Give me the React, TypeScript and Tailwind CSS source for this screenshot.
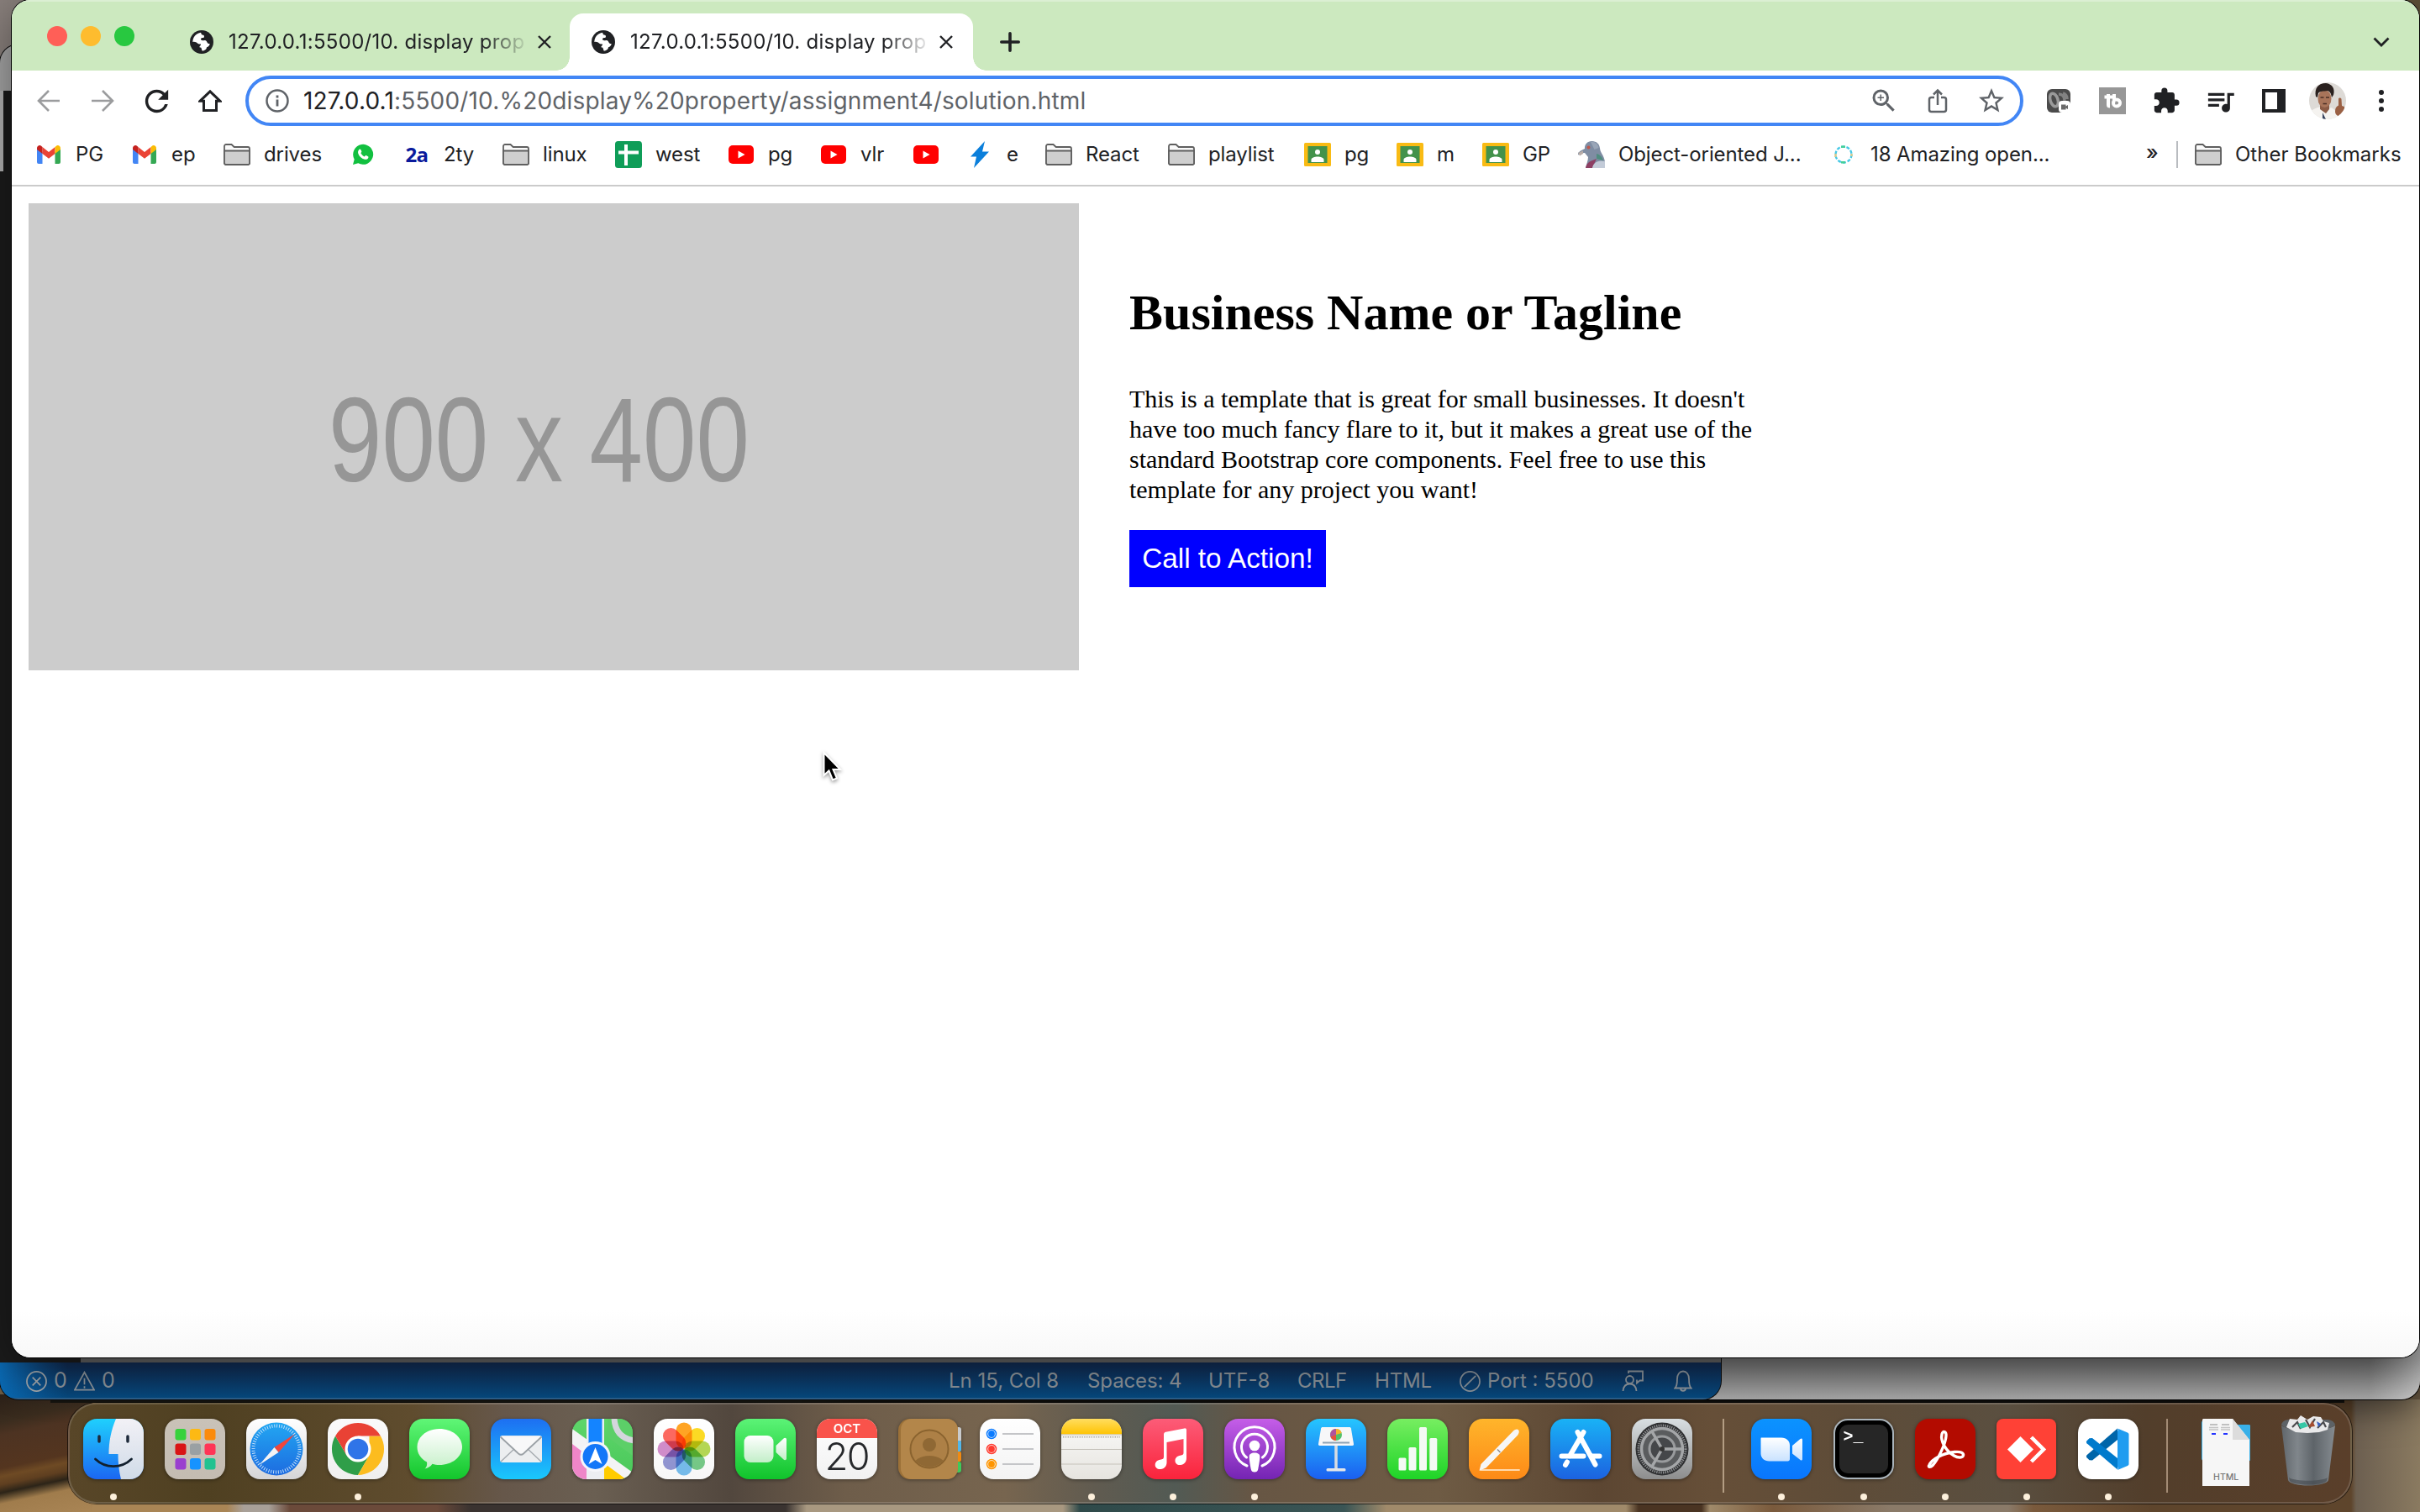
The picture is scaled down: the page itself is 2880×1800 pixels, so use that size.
import React from 'react';
import type { ReactNode } from 'react';
import { MdExtension, MdQueueMusic, MdRefresh, MdStarBorder, MdZoomIn } from 'react-icons/md';

/* ---------- small browser icons ---------- */

const Globe = () => (
  <svg viewBox="0 0 28 28" className="size-[28px] shrink-0">
    <circle cx="14" cy="14" r="14" fill="#202124" />
    <path
      d="M13 2.8c-3.600.4-6.900 2.800-8.500 6 -.8 1.600-1.200 3.300-1.200 5.200 2.500-.6 4.300.2 5.700 1.500 1 .9 2.300 1 3.600.8l.4 1.700c-1 .4-1.700 1.200-1.600 2.300l2 .5 1.200 3.800c3.800-.4 5.200-2.400 5.400-4.400 1.900-.5 3.500-2 3.700-4.300-1.600.3-3-.6-3.400-2-.7-1.600-2.200-2-4-1.700-1.600.2-3.400-.1-3.300-1.600.1-1.300 1.500-1.500 2.900-1.600 1-.2 1.200-1.200 1-2.200-.3-1.300-1.700-1.400-2.900-1.600z"
      fill="#fff"
    />
    <path d="M3.300 14.300c1.900-.5 4.300.6 5.100 2.500.5 1.300 2.600 1.100 2.600 2.500 0 1.300-1.700 1.900-1.500 4.100C5.900 21.800 3.300 18.200 3.300 14.300z" fill="#202124" />
  </svg>
);

const CloseX = () => (
  <svg viewBox="0 0 16 16" className="size-4 shrink-0" stroke="#202124" strokeWidth="2.4">
    <path d="M1 1l14 14M15 1L1 15" />
  </svg>
);

const Gmail = () => (
  <svg viewBox="0 0 28 22" className="w-[28px] h-[22px]">
    <path d="M0 4v16a2 2 0 0 0 2 2h4.500V8z" fill="#4285f4" />
    <path d="M28 4v16a2 2 0 0 1-2 2h-4.500V8z" fill="#34a853" />
    <path d="M6.500 2l7.500 6 7.500-6v8L14 15.800 6.500 10z" fill="#ea4335" />
    <path d="M0 3.500C0 .5 3.300-.9 5.300.9L6.500 2v8L0 5z" fill="#c5221f" />
    <path d="M28 3.500C28 .5 24.700-.9 22.700.9L21.500 2v8L28 5z" fill="#fbbc04" />
  </svg>
);

const Folder = () => (
  <svg viewBox="0 0 32 26" className="w-[32px] h-[26px] shrink-0" stroke="#5f5f5f" strokeWidth="1.800">
    <path d="M1 23V3a2 2 0 0 1 2-2h6.500l3.200 3H29a2 2 0 0 1 2 2v17a1.800 1.800 0 0 1-2 2H3a2 2 0 0 1-2-2z" fill="#fafafa" />
    <path d="M1 8.500h30V23a1.800 1.800 0 0 1-2 2H3a2 2 0 0 1-2-2z" fill="#cfcfcf" />
  </svg>
);

const WhatsApp = () => (
  <svg viewBox="0 0 26 26" className="size-[26px]">
    <path d="M1 25l1.700-6.300A12 12 0 1 1 7.300 23.300z" fill="#12c040" />
    <path
      d="M8.600 6.800c.5-.5 1.400-.5 1.700.2l1 2.300c.2.500-.1 1-.9 1.900 1 2 2.400 3.300 4.500 4.200.8-1 1.200-1.600 1.800-1.300l2.300 1.100c.6.300.5 1.200.1 2-.7 1.300-2.400 1.900-4 1.500-4-1-6.900-3.900-7.900-7.300-.5-1.800.3-3.600 1.400-4.600z"
      fill="#fff"
    />
  </svg>
);

const Sheets = () => (
  <svg viewBox="0 0 32 32" className="size-8">
    <rect width="32" height="32" rx="3.500" fill="#0f9d58" />
    <path d="M11 4h4v7.500h13v4H15V29h-4V15.500H4v-4h7z" fill="#fff" />
  </svg>
);

const YouTube = () => (
  <svg viewBox="0 0 30 22" className="w-[30px] h-[22px]">
    <rect width="30" height="22" rx="5" fill="#f00" />
    <path d="M11.500 6.500v9l8-4.500z" fill="#fff" />
  </svg>
);

const Bolt = () => (
  <svg viewBox="0 0 22 32" className="w-[22px] h-8">
    <path d="M17 0L0 18.500h7L4 32 22 12.500h-8z" fill="#0b7fdb" />
  </svg>
);

const Classroom = () => (
  <svg viewBox="0 0 32 28" className="w-8 h-7">
    <rect width="32" height="28" rx="1.500" fill="#f9bb14" />
    <rect x="4.500" y="4" width="23" height="20" fill="#43924b" />
    <circle cx="16" cy="11" r="3" fill="#fff" />
    <path d="M8.500 23v-3c0-2 4-3.500 7.500-3.500s7.500 1.500 7.500 3.500v3z" fill="#fff" />
  </svg>
);

const Pigeon = () => (
  <svg viewBox="0 0 32 32" className="size-8">
    <path d="M8 9C7.500 4 11 0 16.500 0c5.500 0 9 3.500 9.500 8.500.3 3.500 2 5.500 3.500 8.500 1.500 3 2.500 6 2.500 9v6H9c1-5 3-9 3-13l-4-5-5 .5-3 2v-2.500l3-2.500z" fill="#7f8da3" />
    <path d="M15 1c4-1 9 2 9.500 7l-5 2z" fill="#9aa6b8" />
    <path d="M22 15c4 1 7 4 8 8l-8-2z" fill="#4f8c7f" />
    <path d="M9 32c1-4 3-7.500 8-9l5-2-5 11z" fill="#8d3f63" />
    <path d="M17 32c1-6 6-10 15-8v8z" fill="#c3cbd8" />
    <circle cx="12.500" cy="7.500" r="2" fill="#c0564a" />
    <path d="M0 14l6-2.500v3.500l-4 2.500z" fill="#b7aca8" />
  </svg>
);

const DashedRing = () => (
  <svg viewBox="0 0 24 24" className="size-6" fill="none" strokeWidth="2.400">
    <circle cx="12" cy="12" r="9.500" stroke="#45c8e6" strokeDasharray="4 2" />
    <path d="M2.500 11v4M21.500 11v3" stroke="#d9c98a" />
    <path d="M9 2.800h5M9 21.200h5" stroke="#45cf9a" />
  </svg>
);

const Arrow = ({ flip = false }: { flip?: boolean }) => (
  <svg viewBox="0 0 28 28" className={flip ? 'size-[28px] rotate-180' : 'size-[28px]'} fill="none" stroke="#9b9c9e" strokeWidth="2.600">
    <path d="M27 14H2.500M14 2L2 14l12 12" />
  </svg>
);

const Home = () => (
  <svg viewBox="0 0 28 28" className="size-[28px]" fill="none" stroke="#202124" strokeWidth="3">
    <path d="M2.200 14.200L14 2.800l11.800 11.400h-4.300V25.500H6.500V14.200z" />
  </svg>
);

const InfoCircle = () => (
  <svg viewBox="0 0 28 28" className="size-[28px] shrink-0" fill="none" stroke="#5f6368" strokeWidth="2.500">
    <circle cx="14" cy="14" r="12.500" />
    <path d="M14 12.500v8M14 7.500v3" strokeWidth="2.800" />
  </svg>
);

const Share = () => (
  <svg viewBox="0 0 24 30" className="w-6 h-[30px]" fill="none" stroke="#5f6368" strokeWidth="2.500">
    <path d="M8 11H4.500A2.500 2.500 0 0 0 2 13.500v12A2.500 2.500 0 0 0 4.500 28h15a2.500 2.500 0 0 0 2.500-2.500v-12a2.500 2.500 0 0 0-2.500-2.500H16M12 20V2.500M7 7.500l5-5 5 5" />
  </svg>
);

const Recorder = () => (
  <svg viewBox="0 0 28 28" className="size-[28px]">
    <rect width="28" height="28" rx="6" fill="#4b4b4b" />
    <ellipse cx="8.500" cy="13" rx="4.500" ry="8" fill="none" stroke="#9a9a9a" strokeWidth="3.500" transform="rotate(-18 8.500 13)" />
    <path d="M14 6c4 0 7 3 7 8M19 5c3 1 5 3 5 7" fill="none" stroke="#828282" strokeWidth="3.500" />
    <rect x="14" y="14" width="14" height="14" rx="4" fill="#fff" />
    <path d="M17 18.500h5.500v2l2.500-1.500v5l-2.500-1.500v2H17z" fill="#6a6a6a" />
  </svg>
);

/* A "tb" monogram with a play-button counter. */
const TubeBuddy = () => (
  <svg viewBox="0 0 32 32" className="size-8" fill="none" stroke="#fff" strokeWidth="4">
    <rect width="32" height="32" fill="#979797" stroke="none" />
    <path d="M6.500 11.500h13M11 8v13c0 1 .5 1.500 2 1.500M18 8v10" />
    <circle cx="21" cy="18.500" r="4" />
    <path d="M19.500 16.200l4 2.300-4 2.300z" fill="#979797" stroke="none" />
  </svg>
);

const SidePanel = () => <div className="size-[28px] border-4 border-r-[10px] border-[#202124] bg-white" />;

const Avatar = () => (
  <svg viewBox="0 0 44 44" className="size-11">
    <clipPath id="avatar">
      <circle cx="22" cy="22" r="22" />
    </clipPath>
    <g clipPath="url(#avatar)">
      <rect width="44" height="44" fill="#dddad6" />
      <path d="M0 36c4-4 9-6 14-7l6 6 6-5c5 2 8 6 9 16H0z" fill="#f5f3f0" />
      <path d="M13 24h11v8l-4 5-7-5z" fill="#8a5a45" />
      <ellipse cx="18.500" cy="19.500" rx="8" ry="10.500" fill="#a8745a" />
      <path d="M8 17C6 7 11 1 20 1c8 1 11 7 9 14l-2 3c-1-5-2-7-5-8-5 1-9 0-11 3l-1 5z" fill="#2a211f" />
      <path d="M13.500 18h4M20 18h4M16.500 25.500h4.500" stroke="#4a2e25" strokeWidth="1.300" />
      <path d="M16 36l4 8h-4z" fill="#33405c" />
      <path d="M31 35c0-4 1-6 4-7.500V20c0-2 3-2 3.500 0l.5 8 3 1v9l-5 3c-4-1-6-3-6-6z" fill="#9a6044" />
    </g>
  </svg>
);

const Dots = () => (
  <div className="flex flex-col gap-1">
    <span className="size-1.5 rounded-full bg-[#202124]" />
    <span className="size-1.5 rounded-full bg-[#202124]" />
    <span className="size-1.5 rounded-full bg-[#202124]" />
  </div>
);

/* ---------- browser chrome ---------- */

function Tab({ active = false }: { active?: boolean }) {
  return (
    <div className={'relative flex h-[68px] items-center rounded-t-[16px] pl-[26px] ' + (active ? 'w-[480px] bg-white' : 'w-[478px]')}>
      {active && (
        <>
          <span className="absolute bottom-0 -left-4 size-4 bg-[radial-gradient(circle_at_0_0,#cce9bf_15.500px,#fff_16px)]" />
          <span className="absolute -right-4 bottom-0 size-4 bg-[radial-gradient(circle_at_100%_0,#cce9bf_15.500px,#fff_16px)]" />
        </>
      )}
      <Globe />
      <span className="mr-[13px] ml-[18px] w-[355px] whitespace-pre text-[24px] tracking-[0.280px] text-[#202124] [mask-image:linear-gradient(90deg,#000_85%,transparent_101%)]">
        127.0.0.1:5500/10. display prop
      </span>
      <CloseX />
    </div>
  );
}

const bookmarks: { icon: ReactNode; label: string; width: string }[] = [
  { icon: <Gmail />, label: 'PG', width: 'w-[114px]' },
  { icon: <Gmail />, label: 'ep', width: 'w-[110px]' },
  { icon: <Folder />, label: 'drives', width: 'w-[150px]' },
  { icon: <WhatsApp />, label: '', width: 'w-[64px]' },
  { icon: <span className="font-['Open_Sans'] text-[24px] font-bold tracking-[-0.500px] text-[#0a1a9c]">2a</span>, label: '2ty', width: 'w-[118px]' },
  { icon: <Folder />, label: 'linux', width: 'w-[134px]' },
  { icon: <Sheets />, label: 'west', width: 'w-[134px]' },
  { icon: <YouTube />, label: 'pg', width: 'w-[110px]' },
  { icon: <YouTube />, label: 'vlr', width: 'w-[110px]' },
  { icon: <YouTube />, label: '', width: 'w-[64px]' },
  { icon: <Bolt />, label: 'e', width: 'w-[94px]' },
  { icon: <Folder />, label: 'React', width: 'w-[146px]' },
  { icon: <Folder />, label: 'playlist', width: 'w-[162px]' },
  { icon: <Classroom />, label: 'pg', width: 'w-[110px]' },
  { icon: <Classroom />, label: 'm', width: 'w-[102px]' },
  { icon: <Classroom />, label: 'GP', width: 'w-[114px]' },
  { icon: <Pigeon />, label: 'Object-oriented J...', width: 'w-[300px]' },
  { icon: <DashedRing />, label: '18 Amazing open...', width: 'w-[270px]' },
];

const ToolButton = ({ children }: { children: ReactNode }) => <div className="flex w-16 shrink-0 items-center justify-center">{children}</div>;

function BrowserWindow() {
  return (
    <div className="absolute top-0 left-[14px] flex h-[1616px] w-[2865px] flex-col overflow-hidden rounded-[22px] bg-white shadow-[0_0_0_1px_#000,0_12px_60px_rgba(0,0,0,0.45)]">
      <div className="flex h-[84px] shrink-0 items-end border-t-2 border-[#dbefd3] bg-[#cce9bf]">
        <div className="flex h-[82px] w-[186px] items-center gap-4 pl-[42px]">
          <span className="size-6 rounded-full bg-[#ff5f57]" />
          <span className="size-6 rounded-full bg-[#febc2e]" />
          <span className="size-6 rounded-full bg-[#28c840]" />
        </div>
        <Tab />
        <Tab active />
        <div className="flex h-[68px] flex-1 items-center justify-between pr-[35px] pl-8">
          <svg viewBox="0 0 24 24" className="size-6" stroke="#202124" strokeWidth="3.600" strokeLinecap="round">
            <path d="M12 1.800v20.400M1.800 12h20.400" />
          </svg>
          <svg viewBox="0 0 20 12" className="w-5 h-3" fill="none" stroke="#202124" strokeWidth="2.800">
            <path d="M1.500 1.500L10 10l8.500-8.500" />
          </svg>
        </div>
      </div>

      <div className="flex h-[72px] shrink-0 items-center pl-3">
        <ToolButton><Arrow /></ToolButton>
        <ToolButton><Arrow flip /></ToolButton>
        <ToolButton><MdRefresh className="size-[41px] text-[#202124]" /></ToolButton>
        <ToolButton><Home /></ToolButton>
        <div className="ml-[10px] flex h-[60px] w-[2116px] items-center rounded-full border-4 border-[#4286f5] pr-0.5 pl-5">
          <InfoCircle />
          <span className="ml-[17px] flex-1 whitespace-pre text-[28px] tracking-[0.170px] text-[#5f6368]">
            <span className="text-[#202124]">127.0.0.1</span>:5500/10.%20display%20property/assignment4/solution.html
          </span>
          <ToolButton><MdZoomIn className="size-9 text-[#5f6368]" /></ToolButton>
          <ToolButton><Share /></ToolButton>
          <ToolButton><MdStarBorder className="size-9 text-[#5f6368]" /></ToolButton>
        </div>
        <div className="ml-[10px] flex items-center">
          <ToolButton><Recorder /></ToolButton>
          <ToolButton><TubeBuddy /></ToolButton>
          <ToolButton><MdExtension className="size-[34px] text-[#202124]" /></ToolButton>
          <ToolButton><MdQueueMusic className="size-[39px] text-[#202124]" /></ToolButton>
          <ToolButton><SidePanel /></ToolButton>
          <ToolButton><Avatar /></ToolButton>
          <ToolButton><Dots /></ToolButton>
        </div>
      </div>

      <div className="flex h-[66px] shrink-0 items-center border-b-2 border-[#cbcbcb] pb-2 pl-7 text-[24px] text-[#202124]">
        {bookmarks.map((b, i) => (
          <div key={i} className={'flex shrink-0 items-center gap-4 whitespace-pre ' + b.width}>
            <span className="flex w-8 shrink-0 items-center justify-center">{b.icon}</span>
            <span className="tracking-[-0.100px]">{b.label}</span>
          </div>
        ))}
        <span className="ml-[106px] w-[36px] pb-1 font-medium">»</span>
        <span className="h-8 w-0.5 bg-[#b9bcc0]" />
        <span className="ml-5 flex items-center gap-4 whitespace-pre"><Folder />Other Bookmarks</span>
      </div>

      <div className="flex min-h-0 flex-1 items-start bg-[linear-gradient(180deg,#fff_96%,#f8f8f8)] p-5">
        <div className="h-[556px] w-[1250px] shrink-0 bg-[#ccc] pt-[211px] pl-[357px]">
          <span className="inline-block origin-left scale-x-[0.803] whitespace-pre font-['Liberation_Sans'] text-[142px] leading-[142px] text-[#969696]">900 x 400</span>
        </div>
        <div className="ml-[60px] pt-[96px] font-['Liberation_Serif'] text-black">
          <h1 className="text-[60px] leading-[68px] font-bold">Business Name or Tagline</h1>
          <p className="mt-[51px] text-[30px] leading-[36px] tracking-[-0.020px] whitespace-pre">
            This is a template that is great for small businesses. It doesn't{'\n'}
            have too much fancy flare to it, but it makes a great use of the{'\n'}
            standard Bootstrap core components. Feel free to use this{'\n'}
            template for any project you want!
          </p>
          <button className="mt-[30px] flex h-[68px] w-[234px] items-center justify-center bg-[#00f] font-['Liberation_Sans'] text-[33.300px] text-white">
            <span className="whitespace-pre">Call to Action!</span>
          </button>
        </div>
      </div>
    </div>
  );
}

/* ---------- editor window behind the browser ---------- */

const Gap = ({ className, children }: { className: string; children: ReactNode }) => <span className={'flex shrink-0 items-center whitespace-pre ' + className}>{children}</span>;

function EditorWindow() {
  return (
    <div className="absolute top-[53px] left-0 flex h-[1613px] w-[2048px] flex-col justify-between overflow-hidden rounded-[22px] bg-[#1c1c1c] shadow-[0_0_0_1px_#0b0b0b]">
      <div className="h-[55px] bg-[#a6a6a6]" />
      <div className="flex h-[1514px] flex-col justify-between">
        <div className="h-[96px] w-1 bg-[#b5b5b5]" />
        <div className="ml-[96px] h-[6px] bg-[#626262]" />
      </div>
      <div className="flex h-[44px] shrink-0 items-center border-b-2 border-[#2d608c] bg-[linear-gradient(90deg,#0a6ab4_0,rgba(10,106,180,0)_80px),linear-gradient(180deg,#112b52,#064a80)] pt-0.5 pl-[31px] text-[25px] text-[#8f979e]">
        <svg viewBox="0 0 26 26" className="size-[25px]" fill="none" stroke="#a3a8ac" strokeWidth="1.800">
          <circle cx="13" cy="13" r="12" /><path d="M8 8l10 10M18 8L8 18" />
        </svg>
        <Gap className="w-[32px] pl-2">0</Gap>
        <svg viewBox="0 0 26 26" className="size-[25px]" fill="none" stroke="#8f979e" strokeWidth="1.800">
          <path d="M13 1.800L25 23.500H1zM13 9v8M13 19v2.500" />
        </svg>
        <Gap className="w-[1016px] pl-2">0</Gap>
        <Gap className="w-[165px] text-[24px]">Ln 15, Col 8</Gap>
        <Gap className="w-[144px] text-[24px] tracking-[-0.100px]">Spaces: 4</Gap>
        <Gap className="w-[106px] text-[24px]">UTF-8</Gap>
        <Gap className="w-[92px] text-[24px] tracking-[-0.500px]">CRLF</Gap>
        <Gap className="w-[101px] text-[24px] tracking-[-0.200px]">HTML</Gap>
        <svg viewBox="0 0 26 26" className="size-[25px]" fill="none" stroke="#8f979e" strokeWidth="1.800">
          <circle cx="13" cy="13" r="12" /><path d="M20 6L6 20" />
        </svg>
        <Gap className="w-[168px] pl-2 text-[24px]">Port : 5500</Gap>
        <svg viewBox="0 0 26 26" className="size-[26px]" fill="none" stroke="#8f979e" strokeWidth="1.800">
          <circle cx="9.500" cy="11.500" r="4.500" /><path d="M1.500 25c.5-5.500 3.500-8.500 8-8.500s7.500 3 8 8.500M8 4V1.500h17v11h-3.500L18 15.500v-4" />
        </svg>
        <svg viewBox="0 0 22 26" className="ml-[36px] w-[22px] h-[26px]" fill="none" stroke="#8f979e" strokeWidth="1.800">
          <path d="M1.500 21.500c2-2 2.500-4 2.500-11C4 5 7 1.500 11 1.500S18 5 18 10.500c0 7 .5 9 2.500 11zM8 22.500c.5 3 5.500 3 6 0" />
        </svg>
      </div>
    </div>
  );
}

/* ---------- dock ---------- */

const Svg = ({ children }: { children: ReactNode }) => (
  <svg viewBox="0 0 72 72" className="size-[72px] overflow-visible">{children}</svg>
);

const Grad = ({ id, a, b }: { id: string; a: string; b: string }) => (
  <linearGradient id={id} x1="0" y1="0" x2="0" y2="1"><stop offset="0" stopColor={a} /><stop offset="1" stopColor={b} /></linearGradient>
);

const Tile = ({ id, a, b, children }: { id: string; a: string; b: string; children?: ReactNode }) => (
  <Svg>
    <defs><Grad id={id} a={a} b={b} /><clipPath id={id + 'c'}><rect width="72" height="72" rx="16.500" /></clipPath></defs>
    <rect width="72" height="72" rx="16.500" fill={'url(#' + id + ')'} />
    <g clipPath={'url(#' + id + 'c)'}>{children}</g>
  </Svg>
);

const Finder = () => (
  <Tile id="fi" a="#1fd0fd" b="#1b67f2">
    <defs><Grad id="fi2" a="#f2f1f6" b="#d0dbe8" /></defs>
    <path d="M39 0c-6 14-8.500 28-8.500 42h11c0 10 1 20 3.500 30H72V0z" fill="url(#fi2)" />
    <path d="M19 21v6M53 21v6" stroke="#1d2a3a" strokeWidth="3.500" strokeLinecap="round" />
    <path d="M14.500 48c12 11.500 31 11.500 43 0" stroke="#12202e" strokeWidth="2.800" strokeLinecap="round" fill="none" />
  </Tile>
);

const launchColors = ['#37d23c', '#fdb913', '#fb8b0c', '#d91414', '#9aa0a3', '#ff3556', '#9a3fcf', '#1793ff', '#22c290'];
const Launchpad = () => (
  <Tile id="la" a="#c9c2b8" b="#c4bcb2">
    {launchColors.map((c, i) => <rect key={i} x={12.500 + (i % 3) * 17.500} y={12 + Math.floor(i / 3) * 17.500} width="13" height="13.500" rx="3" fill={c} />)}
  </Tile>
);

const Safari = () => (
  <Tile id="sa" a="#ffffff" b="#d5d5d7">
    <defs><Grad id="sa2" a="#22a7f2" b="#1d6be0" /></defs>
    <circle cx="36" cy="36" r="31.500" fill="url(#sa2)" />
    <circle cx="36" cy="36" r="27.500" fill="none" stroke="#cfe6fb" strokeWidth="4" strokeDasharray="0.900 1.980" />
    <path d="M58 18L38.500 40 33.500 34z" fill="#f0463c" />
    <path d="M15.500 55L38.500 40 33.500 34z" fill="#f3f3f5" />
  </Tile>
);

const Chrome = () => (
  <Tile id="ch" a="#fafafa" b="#efefef">
    <path d="M9.100 20.500A31 31 0 0 0 36 67L49.500 43.500 36 36 22.500 43.500z" fill="#2f9e49" />
    <path d="M62.900 20.500A31 31 0 0 1 36 67L49.500 43.500 49.500 20.500z" fill="#fcbc1f" />
    <path d="M36 20.500h26.900A31 31 0 0 0 9.100 20.500L22.500 43.500z" fill="#e94235" />
    <circle cx="36" cy="36" r="15.500" fill="#fff" />
    <circle cx="36" cy="36" r="12.300" fill="#2f74e8" />
  </Tile>
);

const Messages = () => (
  <Tile id="me" a="#60f677" b="#13c62c">
    <defs><Grad id="me2" a="#ffffff" b="#c6f0c9" /></defs>
    <path d="M36 12c15 0 27 9.500 27 21.500S51 55 36 55c-3 0-6-.4-8.500-1.200C25.500 57 22 59 18.500 59.500c2.500-2 3-5 2.500-8C13.500 47.500 9.500 41 9.500 33.500 9.500 21.500 21 12 36 12z" fill="url(#me2)" />
  </Tile>
);

const Mail = () => (
  <Tile id="ma" a="#1d6ff2" b="#1ac8fc">
    <rect x="11" y="20" width="50" height="32" rx="3" fill="#eceef0" />
    <path d="M12 51l18-17M60 51L42 34" stroke="#a8adb2" strokeWidth="1.500" />
    <path d="M11.500 21.500L33 41.500c2 1.700 4 1.700 6 0L60.500 21.500" stroke="#9ba1a6" strokeWidth="1.800" fill="#f8f8f9" />
  </Tile>
);

const Maps = () => (
  <Tile id="mp" a="#5ed66a" b="#49c75a">
    <path d="M0 12l72 52v8H0z" fill="#f3f3f5" />
    <path d="M0 30l17 13v29H0z" fill="#ee86c8" />
    <path d="M38 53l26 19H38z" fill="#ffcc00" />
    <path d="M42 22l30 22V0H42z" fill="#5ccf68" />
    <path d="M17 0h21v72H17z" fill="#eceef2" />
    <path d="M19.500 0h16v34h-16z" fill="#1484ff" />
    <path d="M50 0c1 15 9 24 24 26" stroke="#d4d6dc" strokeWidth="7" fill="none" />
    <circle cx="27.500" cy="45" r="18" fill="#f5f6fa" />
    <circle cx="27.500" cy="45" r="15" fill="#1477f8" />
    <path d="M27.500 34l8 20-8-5-8 5z" fill="#fff" />
  </Tile>
);

const petals = ['#ff9500', '#fad400', '#a8cf38', '#5fbf73', '#5fb0e6', '#7f83c9', '#c879c0', '#fb5046'];
const Photos = () => (
  <Tile id="ph" a="#ffffff" b="#f7f7f7">
    {petals.map((c, i) => <rect key={c} x="26.500" y="4.500" width="19" height="31" rx="9.500" fill={c} fillOpacity="0.860" className="mix-blend-multiply" transform={'rotate(' + i * 45 + ' 36 36)'} />)}
  </Tile>
);

const FaceTime = () => (
  <Tile id="ft" a="#5cf377" b="#10c32b">
    <defs><Grad id="ft2" a="#ffffff" b="#c2eec8" /></defs>
    <rect x="10.500" y="20" width="35" height="32" rx="7.500" fill="url(#ft2)" />
    <path d="M48.500 32l9-8.500c1.500-1.300 3.500-.8 3.500 1.300v22.400c0 2-2 2.600-3.500 1.300l-9-8.500z" fill="url(#ft2)" />
  </Tile>
);

const Calendar = () => (
  <div className="flex size-[72px] flex-col overflow-hidden rounded-[16.500px] bg-[linear-gradient(180deg,#fff,#f1f1f1)] text-center">
    <span className="h-[22.500px] bg-[#f9534b] text-[15px] leading-[24px] font-semibold text-white">OCT</span>
    <span className="font-['Inter'] text-[45px] leading-[44px] font-light tracking-[-1.500px] text-[#26282b]">20</span>
  </div>
);

const Contacts = () => (
  <Svg>
    <rect x="60" y="10" width="15" height="18" rx="3" fill="#c9cbcd" />
    <rect x="60" y="26" width="15" height="13" rx="2" fill="#52b7ea" />
    <rect x="60" y="39" width="15" height="12" rx="2" fill="#f08a12" />
    <rect x="60" y="51" width="15" height="13" rx="3" fill="#3fc95b" />
    <rect width="71" height="72" rx="14" fill="#9c7138" />
    <rect x="3" width="68" height="72" rx="13" fill="#b3864a" />
    <clipPath id="coc"><circle cx="37" cy="36" r="21.500" /></clipPath>
    <circle cx="37" cy="36" r="22.500" fill="#ad8046" stroke="#8a632f" strokeWidth="2" />
    <g clipPath="url(#coc)"><circle cx="37" cy="31" r="8" fill="#8f6834" /><ellipse cx="37" cy="56" rx="19" ry="12" fill="#8f6834" /></g>
  </Svg>
);

const Reminders = () => (
  <Tile id="re" a="#ffffff" b="#f3f3f3">
    {['#0b7bff', '#ff3b30', '#ff9500'].map((c, i) => (
      <g key={c}>
        <circle cx="14" cy={18 + i * 18} r="5.500" fill="none" stroke={c} strokeWidth="1.500" />
        <circle cx="14" cy={18 + i * 18} r="3.900" fill={c} />
        <path d={'M27 ' + (18 + i * 18) + 'h37'} stroke="#c4c5c8" strokeWidth="1.800" />
      </g>
    ))}
  </Tile>
);

const Notes = () => (
  <Tile id="no" a="#fbfbfa" b="#e6e4df">
    <defs><Grad id="no2" a="#ffdd60" b="#fec302" /></defs>
    <rect width="72" height="18.500" fill="url(#no2)" />
    <path d="M0 19h72M0 36.500h72M0 54h72" stroke="#c5c2ba" strokeWidth="1.200" />
    <path d="M2 21.800h68" stroke="#a8a59e" strokeWidth="1.400" strokeDasharray="1.400 1.400" />
  </Tile>
);

const Music = () => (
  <Tile id="mu" a="#fc5c78" b="#fa233b">
    <path d="M25 18.500c0-1.500 1-2.400 2.400-2.700L49.500 11.400c1.500-.3 2.500.5 2.500 2V47c0 4.500-3 7.500-7 8-4 .5-6.500-2-6.500-5 0-3.500 2.500-5.500 6-6.200 3-.6 4-1 4-3.800V24L28.500 28v24c0 4.500-3 7.500-7 8-4 .5-6.800-2-6.800-5 0-3.500 2.500-5.500 6-6.200 3.200-.6 4.300-1 4.300-4z" fill="#fff" />
  </Tile>
);

const Podcasts = () => (
  <Tile id="po" a="#c55ee8" b="#7424b3">
    <g fill="none" stroke="#fff" strokeWidth="3" strokeLinecap="round">
      <path d="M27 56A24 24 0 1 1 45 56" /><path d="M26.500 46A15.500 15.500 0 1 1 45.500 46" />
    </g>
    <circle cx="36" cy="32" r="6.300" fill="#fff" />
    <path d="M36 40.500c4 0 6.300 1.500 6.300 4.500 0 4-1.300 11-2 15-.4 2.500-2 3.500-4.300 3.500s-3.900-1-4.300-3.500c-.7-4-2-11-2-15 0-3 2.300-4.500 6.300-4.500z" fill="#fff" />
  </Tile>
);

const Keynote = () => (
  <Tile id="ke" a="#25c6ff" b="#1b5ff0">
    <path d="M36 32v28" stroke="#d8dce2" strokeWidth="3.500" />
    <rect x="24.500" y="59" width="23" height="3.500" rx="1.500" fill="#e3e6ea" />
    <path d="M20 10h32c1 0 1.700.6 1.900 1.600L57 30c.2 1.200-.5 2-1.600 2H16.600c-1.100 0-1.800-.8-1.600-2l3.100-18.400c.2-1 .9-1.600 1.900-1.600z" fill="#f7f7f8" />
    <path d="M20 28.500h32" stroke="#8ea3b5" strokeWidth="1.800" />
    <circle cx="36" cy="19" r="7" fill="#52c26a" />
    <path d="M36 19V12a7 7 0 0 1 6.700 5z" fill="#f6b32b" /><path d="M36 19V12a7 7 0 0 0-6.500 9.500z" fill="#b0529d" /><path d="M36 19l-6.500 2.500A7 7 0 0 0 36 26z" fill="#e8503a" />
  </Tile>
);

const Numbers = () => (
  <Tile id="nu" a="#77ee61" b="#1ed427">
    <rect x="13.500" y="46.500" width="9" height="15" rx="1.500" fill="#f4faf4" />
    <rect x="25.500" y="34" width="9" height="27.500" rx="1.500" fill="#f4faf4" />
    <rect x="38" y="10" width="9" height="51.500" rx="1.500" fill="#f4faf4" />
    <rect x="50.300" y="23" width="9" height="38.500" rx="1.500" fill="#f4faf4" />
  </Tile>
);

const Pages = () => (
  <Tile id="pa" a="#ffb52b" b="#fd8a17">
    <path d="M14 61h46" stroke="#ffd9ac" strokeWidth="1.800" strokeLinecap="round" />
    <path d="M52.500 15c1.500-2 5-3.200 6.500-1.800 1.500 1.500.6 4.500-1 6.600L20.500 58.500l-8 3.200 2-7.700z" fill="#f6f6f7" />
    <path d="M34 36.500l3.500 3.500" stroke="#8b8b8f" strokeWidth="1.500" />
  </Tile>
);

const AppStore = () => (
  <Tile id="as" a="#19b2f6" b="#1c62e0">
    <g stroke="#fff" strokeWidth="6" strokeLinecap="round">
      <path d="M39.500 16L23 44.500M32.500 16l21 38.500M13.500 44.500h26M50 44.500h8.500M20 51.500l-2 3.500" />
    </g>
  </Tile>
);

const Settings = () => (
  <Tile id="se" a="#d9dfe2" b="#8d8d8d">
    <circle cx="36" cy="36" r="31.500" fill="#2e2f31" />
    <circle cx="36" cy="36" r="28" fill="none" stroke="#8e9092" strokeWidth="3" strokeDasharray="1.300 1.300" />
    <circle cx="36" cy="36" r="24.500" fill="#5a5c5e" stroke="#a4a6a8" strokeWidth="3.500" />
    <circle cx="36" cy="36" r="15" fill="#45474a" stroke="#999b9d" strokeWidth="3" />
    <path d="M36 36h24M36 36L24 15.200M36 36L24 56.800" stroke="#a4a6a8" strokeWidth="3.500" />
    <circle cx="36" cy="36" r="3" fill="#333" />
  </Tile>
);

const Zoom = () => (
  <Tile id="zo" a="#0b93ff" b="#0a76fd">
    <defs><Grad id="zo2" a="#ffffff" b="#c9e2ff" /></defs>
    <path d="M12 22.500h24c6 0 10 4 10 9v16.500c0 1.500-1 2.500-2.500 2.500H21.500c-6 0-10-4-10-9V24c0-.9.200-1.500.5-1.500z" fill="url(#zo2)" />
    <path d="M49 32l9.500-8c1.200-1 2.500-.5 2.500 1v23c0 1.500-1.300 2-2.500 1L49 41.500z" fill="url(#zo2)" />
  </Tile>
);

const Terminal = () => (
  <div className="flex size-[72px] rounded-[17px] border-[2.500px] border-[#aab4bb] bg-black p-[5px]">
    <span className="flex-1 rounded-[10px] bg-[#262626] pt-1.5 pl-[5px] font-['Liberation_Mono'] text-[20px] leading-[17px] font-bold text-white">{'>_'}</span>
  </div>
);

const Acrobat = () => (
  <Tile id="ac" a="#b30b00" b="#b30b00">
    <path d="M17 55c3-7 16-14 30-15.500 8-.8 11 1.500 10.500 4-.5 3-6 3.500-11 .5C37 38.500 30 27 32 18.500c1-4.500 5.500-4 5 2C36.500 30 27 49 21 55.500c-3 3-6 2-4-.5z" fill="none" stroke="#fff" strokeWidth="3.400" strokeLinejoin="round" />
  </Tile>
);

const AnyDesk = () => (
  <Svg>
    <rect width="71" height="72" rx="8" fill="#ff4136" />
    <path d="M28.500 21L44 36.500 28.500 52 13 36.500z" fill="#fff" />
    <path d="M41.500 22L56 36.500 41.500 51" fill="none" stroke="#fff" strokeWidth="4.500" />
  </Svg>
);

const VSCode = () => (
  <Tile id="vs" a="#ffffff" b="#ffffff">
    <path d="M47 11.500L47 25 17 49.500l-3.500-.2-3-3c-.8-1-.8-2 0-3z" fill="#0065a9" />
    <path d="M47 60.500V47L17 23l-3.500.2-3 3c-.8 1-.8 2 0 3z" fill="#007acc" />
    <path d="M47 11.500l12 5c1 .5 1.500 1.200 1.500 2.300v35c0 1-.5 1.800-1.500 2.300l-12 5c1.500-1 0-4 0-4V15s1.500-2 0-3.500z" fill="#1f9cf0" />
  </Tile>
);

const HtmlFile = () => (
  <div className="relative flex h-[81px] w-[58px] flex-col">
    <svg viewBox="0 0 58 81" className="absolute inset-0 h-full w-full">
      <rect y="2" width="14" height="48" rx="3" fill="#39b0e8" />
      <rect x="40" y="7" width="19" height="43" rx="3" fill="#39b0e8" />
      <path d="M2 0h35l20 25v55H1V1z" fill="#f6f6f6" />
      <path d="M37 0l20 25H38c-1 0-1-.5-1-1z" fill="#dcdcdc" />
      <path d="M10 7h9M24 7h9" stroke="#8b8b8b" />
      <path d="M9 10.500h11M9 13h11M23 10.500h11M23 13h11" stroke="#c4c4c4" strokeWidth="1.600" />
      <path d="M12 18h5M26 18h5" stroke="#2333ff" strokeWidth="2" />
    </svg>
    <span className="relative mt-auto pb-[5px] text-center text-[10.500px] leading-[12px] font-medium text-[#777]">HTML</span>
  </div>
);

const Trash = () => (
  <svg viewBox="0 0 66 84" className="h-[84px] w-[66px]">
    <defs>
      <linearGradient id="tr" x1="0" x2="1" y1="0" y2="0">
        <stop offset="0" stopColor="#60666b" /><stop offset="0.300" stopColor="#80868b" /><stop offset="0.600" stopColor="#5e6469" /><stop offset="1" stopColor="#858b90" />
      </linearGradient>
    </defs>
    <path d="M1 12l8 65c1 4 12 6.500 24 6.500S56 81 57 77l8-65c-8 7-56 7-64 0z" fill="url(#tr)" />
    <path d="M10 74c8 5 38 5 46 0l-1 4c-4 6-40 6-44 0z" fill="#43484c" fillOpacity="0.600" />
    <path d="M1 11c4 9 60 9 64 0-1-4-6-6-10-6H11C6 5 2 7 1 11z" fill="#5d6266" />
    <path d="M7 14l4-10 9 1 4-5 8 5 7-4 9 1 3 5 7 2-2 8-10 3-14 1-14-1z" fill="#e9e9ea" />
    <path d="M14 14l6-6 4 8M30 5l5 9 6-10M44 15l7-7 3 6" fill="none" stroke="#4a4a4d" strokeWidth="2.200" />
    <path d="M21 10l8-2 4 5-9 3z" fill="#35c7a6" /><path d="M33 14l5-8 3 7z" fill="#a34d2f" /><path d="M43 7l5 3-3 4z" fill="#3b62c4" />
  </svg>
);

const leftApps: { icon: ReactNode; running?: boolean }[] = [
  { icon: <Finder />, running: true }, { icon: <Launchpad /> }, { icon: <Safari /> }, { icon: <Chrome />, running: true },
  { icon: <Messages /> }, { icon: <Mail /> }, { icon: <Maps /> }, { icon: <Photos /> }, { icon: <FaceTime /> }, { icon: <Calendar /> },
  { icon: <Contacts /> }, { icon: <Reminders /> }, { icon: <Notes />, running: true }, { icon: <Music />, running: true },
  { icon: <Podcasts />, running: true }, { icon: <Keynote /> }, { icon: <Numbers /> }, { icon: <Pages /> }, { icon: <AppStore /> }, { icon: <Settings /> },
];

const rightApps: { icon: ReactNode; running?: boolean }[] = [
  { icon: <Zoom />, running: true }, { icon: <Terminal />, running: true }, { icon: <Acrobat />, running: true },
  { icon: <AnyDesk />, running: true }, { icon: <VSCode />, running: true },
];

const DockItem = ({ icon, running }: { icon: ReactNode; running?: boolean }) => (
  <div className="flex w-[97.050px] shrink-0 flex-col items-center">
    <div className="flex size-[72px] items-center justify-center drop-shadow-[0_1px_2px_rgba(0,0,0,0.4)]">{icon}</div>
    <span className={'mt-[17px] size-2 rounded-full ' + (running ? 'bg-[#fdf0dc]' : '')} />
  </div>
);

function Dock() {
  return (
    <div className="absolute top-[1670px] left-[81px] flex h-[120px] w-[2718px] rounded-[34px] border-2 border-white/15 bg-[linear-gradient(90deg,#584628_0%,#4f4021_6%,#5f4c2e_15%,#66574a_19%,#6a5f52_23%,#52473e_29%,#6e5d4a_34%,#77654f_41%,#605b50_45%,#525a54_48.500%,#675644_52%,#6e5b44_60%,#5c4632_67%,#664f38_72%,#5e4c38_78%,#5a4f40_85%,#523e2b_91%,#5a3f2a_100%)] pt-[17px] pl-[3px] shadow-[0_0_0_1px_rgba(0,0,0,0.6)]">
      {leftApps.map((a, i) => <DockItem key={i} {...a} />)}
      <span className="mr-[20px] ml-[23px] h-[88px] w-0.5 shrink-0 bg-[#b39d83]" />
      {rightApps.map((a, i) => <DockItem key={i} {...a} />)}
      <span className="mr-[40px] ml-[21px] h-[88px] w-0.5 shrink-0 bg-[#a28a74]" />
      <HtmlFile />
      <div className="-mt-1 ml-[36px]"><Trash /></div>
    </div>
  );
}

export default function App() {
  return (
    <div className="relative h-[1800px] w-[2880px] overflow-hidden bg-[#6b5a44] font-['Inter',sans-serif]">
      <div className="absolute inset-x-0 top-0 h-[300px] bg-[linear-gradient(90deg,#8a817d,#5f5238)]" />
      <div className="absolute inset-x-0 bottom-0 h-[134px] bg-[linear-gradient(90deg,#a98555_0,#a98555_270px,#a8a098_290px,#a8a098_320px,#6b4a3a_345px,#6b4a3a_520px,#3a3330_560px,#3a3330_935px,#a89880_960px,#a89880_1265px,#2f4a4a_1285px,#3a5555_1600px,#a08a6a_1650px,#a08a6a_1935px,#4a3422_1950px,#4a3422_2025px,#a08a6a_2035px,#7a5a3c_2110px,#8a7a68_2250px,#8a7a68_2390px,#7a5a3c_2420px,#5e452c_2560px,#5e452c_2798px,#6c5f50_2804px,#8a7a60_2880px)]" />
      <div className="absolute top-[1660px] left-0 h-[140px] w-[110px] bg-[linear-gradient(168deg,#2b2018_0,#3a2c1e_20%,#4d3322_30%,#54351f_54%,#6e4a24_60%,#5f3f20_66%,#2c2418_72%,#a07c4c_80%,#a98555_100%)]" />
      <div className="absolute top-[1660px] left-[60px] h-[10px] w-[2730px] bg-[#14130f]" />
      <div className="absolute top-[53px] left-[1000px] h-[1613px] w-[1880px] rounded-[22px] bg-[linear-gradient(90deg,transparent_1820px,rgba(255,255,255,0.350)_1880px),linear-gradient(180deg,#707070_1564px,#a9a9a9_1613px)] shadow-[0_0_0_1px_#000,0_10px_40px_rgba(0,0,0,0.5)]" />
      <EditorWindow />
      <BrowserWindow />
      <Dock />
      <svg viewBox="0 0 28 44" className="absolute top-[893px] left-[977px] h-[44px] w-[28px] drop-shadow-[0_2px_2px_rgba(0,0,0,0.4)]">
        <path d="M3.500 3v27l6-5.500 4.500 11 5-2-4.500-10.500h8.500z" fill="#000" stroke="#fff" strokeWidth="2" />
      </svg>
    </div>
  );
}
